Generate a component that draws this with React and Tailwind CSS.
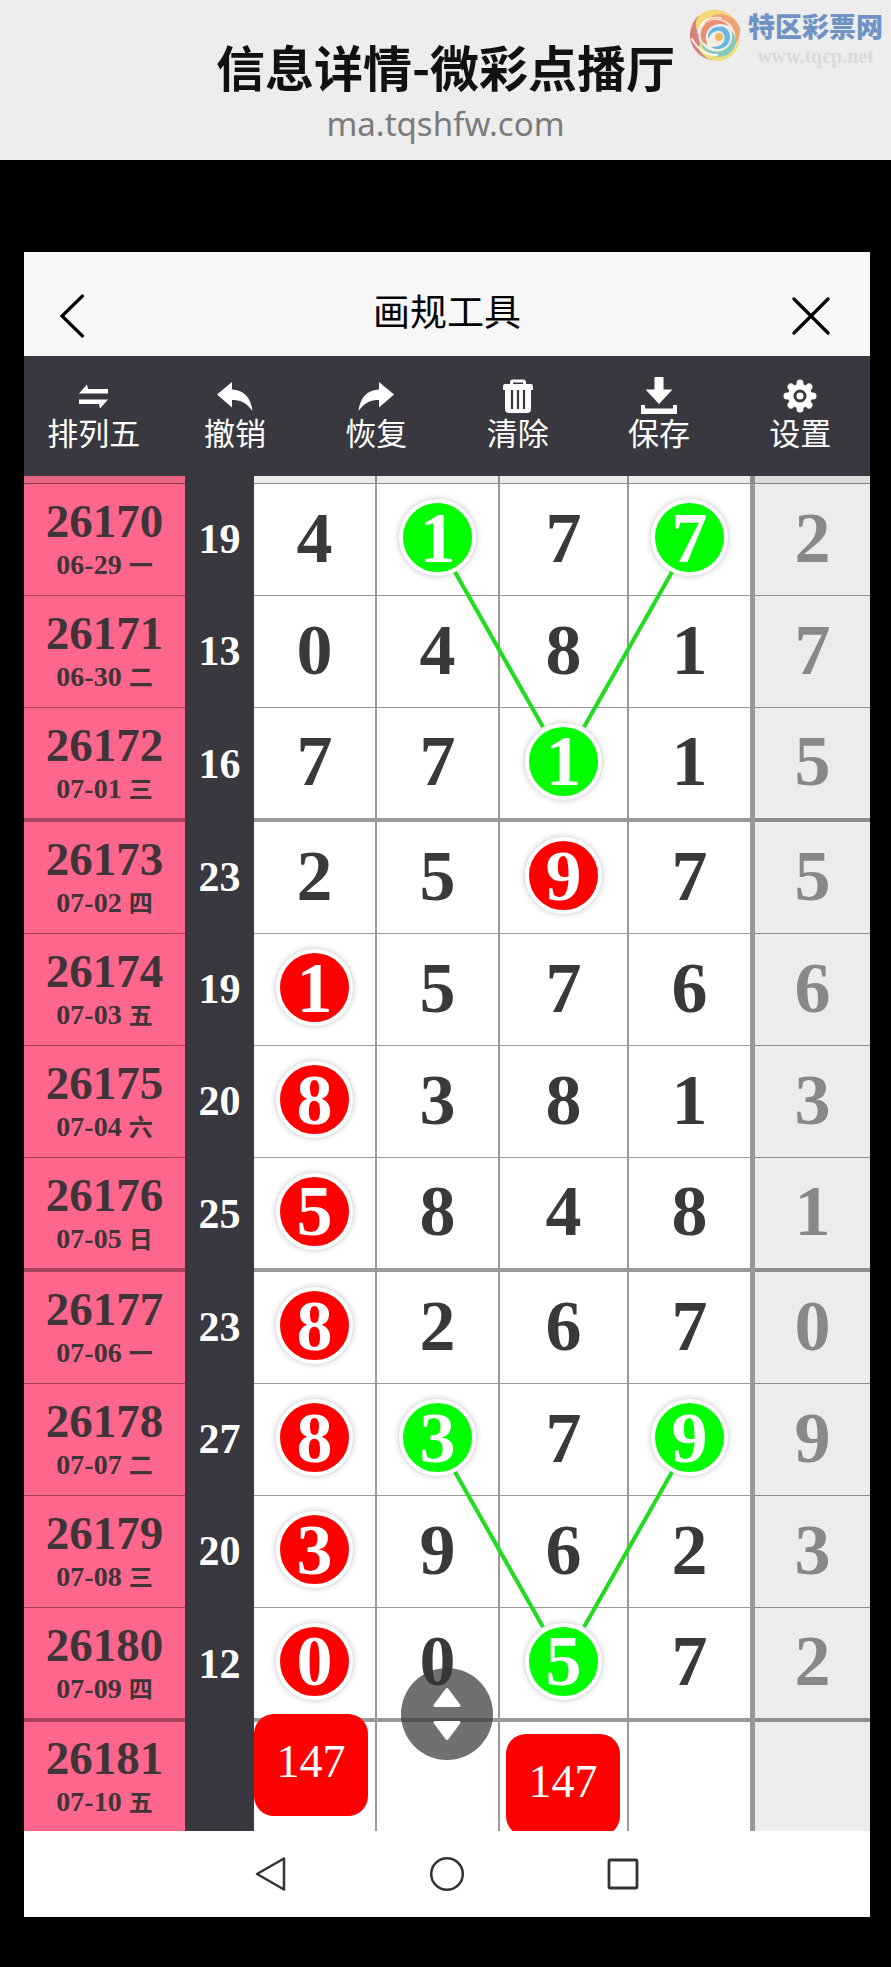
import React from "react";

const rows = [
  { issue: "26170", date: "06-29", day: "一", sum: 19, nums: [4, 1, 7, 7], last: 2, marks: { 1: "green", 3: "green" } },
  { issue: "26171", date: "06-30", day: "二", sum: 13, nums: [0, 4, 8, 1], last: 7 },
  { issue: "26172", date: "07-01", day: "三", sum: 16, nums: [7, 7, 1, 1], last: 5, marks: { 2: "green" }, thick: true },
  { issue: "26173", date: "07-02", day: "四", sum: 23, nums: [2, 5, 9, 7], last: 5, marks: { 2: "red" } },
  { issue: "26174", date: "07-03", day: "五", sum: 19, nums: [1, 5, 7, 6], last: 6, marks: { 0: "red" } },
  { issue: "26175", date: "07-04", day: "六", sum: 20, nums: [8, 3, 8, 1], last: 3, marks: { 0: "red" } },
  { issue: "26176", date: "07-05", day: "日", sum: 25, nums: [5, 8, 4, 8], last: 1, marks: { 0: "red" }, thick: true },
  { issue: "26177", date: "07-06", day: "一", sum: 23, nums: [8, 2, 6, 7], last: 0, marks: { 0: "red" } },
  { issue: "26178", date: "07-07", day: "二", sum: 27, nums: [8, 3, 7, 9], last: 9, marks: { 0: "red", 1: "green", 3: "green" } },
  { issue: "26179", date: "07-08", day: "三", sum: 20, nums: [3, 9, 6, 2], last: 3, marks: { 0: "red" } },
  { issue: "26180", date: "07-09", day: "四", sum: 12, nums: [0, 0, 5, 7], last: 2, marks: { 0: "red", 2: "green" }, thick: true },
];

const markColorMap = {
  green: "bg-[#00ff00]",
  red: "bg-[#ff0000]",
};

const tools = [
  { label: "排列五", icon: <SwapIcon /> },
  { label: "撤销", icon: <UndoIcon /> },
  { label: "恢复", icon: <RedoIcon /> },
  { label: "清除", icon: <TrashIcon /> },
  { label: "保存", icon: <SaveIcon /> },
  { label: "设置", icon: <GearIcon /> },
];

function SwapIcon() {
  return (
    <svg viewBox="0 0 36 36" className="size-9" fill="currentColor">
      <path d="M3 15.500 L11 6.500 L12 11 H32 V15.500 Z" />
      <path d="M3 21.500 H32 L24 30.500 L23 26 H3 Z" />
    </svg>
  );
}

function UndoIcon() {
  return (
    <svg viewBox="0 0 36 36" className="size-9" fill="currentColor">
      <path d="M0 16.500 L15 4 V11.500 C27 12 34 20 35.500 33 C29 24 23 22 15 22 V29.500 Z" />
    </svg>
  );
}

function RedoIcon() {
  return (
    <svg viewBox="0 0 36 36" className="size-9" fill="currentColor">
      <path d="M36 16.500 L21 4 V11.500 C9 12 2 20 0.500 33 C7 24 13 22 21 22 V29.500 Z" />
    </svg>
  );
}

function TrashIcon() {
  return (
    <svg viewBox="0 0 36 36" className="size-9" fill="currentColor">
      <path d="M11.500 7 V4.500 Q11.500 3 13 3 H23 Q24.500 3 24.500 4.500 V7" fill="none" stroke="currentColor" strokeWidth="3" />
      <path d="M5 6 H31 Q33 6 33 9 V12 H3 V9 Q3 6 5 6 Z" />
      <path d="M5 11 H31 V31 Q31 35 27 35 H9 Q5 35 5 31 Z" />
      <path d="M12 12 V31 M18 12 V31 M24 12 V31" stroke="#393840" strokeWidth="2.200" />
    </svg>
  );
}

function SaveIcon() {
  return (
    <svg viewBox="0 0 36 38" className="h-[38px] w-9" fill="currentColor">
      <path d="M13.500 0 H22.500 V12.500 H31.500 L18 27 L4.500 12.500 H13.500 Z" />
      <path d="M0 28 H4 V31.500 H32 V28 H36 V37 H0 Z" />
    </svg>
  );
}

function GearIcon() {
  return (
    <svg viewBox="0 0 36 36" className="size-9" fill="none" stroke="currentColor">
      <path
        d="M18 5 V31 M5 18 H31 M9 9 L27 27 M27 9 L9 27"
        strokeWidth="7"
        strokeLinecap="round"
      />
      <circle cx="18" cy="18" r="9.500" fill="currentColor" strokeWidth="5" />
      <circle cx="18" cy="18" r="5" fill="#fff" stroke="#393840" strokeWidth="3" />
    </svg>
  );
}

function SiteLogo() {
  return (
    <svg viewBox="0 0 54 54" className="size-[54px]" fill="none" strokeLinecap="round">
      <circle cx="27" cy="27" r="25.500" fill="#f4ece4" />
      <path d="M9 9 C2 17 0 28 4 37 C9 47 17 52 27 52 C33 52 37 51 40 49 C25 50 14 43 11 32 C9 23 12 14 20 8 C16 7 12 7 9 9 Z" fill="#d4837e" />
      <path d="M10 9 C16 2 26 0 35 3 C43 6 49 12 51 20 C46 12 38 8 30 8 C19 8 12 15 10 25 C7 19 7 14 10 9 Z" fill="#f4d878" />
      <path d="M16 17 C22 9 36 9 43 17 C48 23 49 32 45 39 C50 34 53 27 52 20 C48 10 40 6 31 6 C24 7 19 11 16 17 Z" fill="#eda472" />
      <path d="M12 33 C15 43 25 48 35 46 C44 43 49 38 52 29 C52 41 43 52 30 53 C22 53 14 48 11 41 Z" fill="#ecdf7c" />
      <path d="M12 32 C16 42 27 46 36 42 C43 38 46 30 43 22 C51 31 48 42 39 47 C29 52 15 46 12 32 Z" fill="#86cbbd" />
      <path d="M20 31 C18 22 25 16 33 18 C41 20 44 28 41 34 C38 41 29 43 23 39 C28 39 34 38 36 33 C38 27 34 22 29 23 C24 24 22 27 20 31 Z" fill="#67b8e0" />
      <path d="M13 31 C11 20 18 12 28 12 C33 12 38 14 41 18 C33 14 24 16 20 22 C17 27 18 33 21 37 C17 36 14 34 13 31 Z" fill="#e99070" />
      <path d="M4 31 C10 42 19 47 29 47" stroke="#fff" strokeWidth="1.800" opacity="0.9" />
      <path d="M10 25 C12 13 22 8 33 10" stroke="#fff" strokeWidth="1.500" opacity="0.8" />
      <path d="M21 37 C15 27 22 17 33 18" stroke="#fff" strokeWidth="1.500" opacity="0.8" />
      <circle cx="31" cy="29" r="4" fill="#f0b65e" />
    </svg>
  );
}

function PageHeader() {
  return (
    <header className="relative flex h-40 flex-col items-center bg-[#ededed] pt-8">
      <h1 className="text-[49px] leading-[68px] font-bold text-[#111]">
        信息详情-微彩点播厅
      </h1>
      <p className="font-['Noto_Sans'] text-[33px] leading-[48px] text-[#7b7b7b]">
        ma.tqshfw.com
      </p>
      <div className="absolute top-2 right-2 flex items-start gap-1.5">
        <SiteLogo />
        <div className="flex flex-col items-center gap-1">
          <span className="text-[27px] leading-9 font-black text-[#6f94c4]">特区彩票网</span>
          <span className="font-['Liberation_Serif'] text-[20px] leading-4 font-bold text-[#dadada]">
            www.tqcp.net
          </span>
        </div>
      </div>
    </header>
  );
}

function TitleBar() {
  return (
    <div className="flex h-[104px] items-center justify-between bg-[#f7f7f7] px-8 pt-3">
      <button type="button" aria-label="返回" className="w-[46px] pt-3">
        <svg viewBox="0 0 36 44" className="h-11 w-9" fill="none" stroke="#000" strokeWidth="3.200" strokeLinecap="round">
          <path d="M26.500 2 L6 22 L26.500 42" />
        </svg>
      </button>
      <h2 className="text-[37px] leading-[48px] text-black">画规工具</h2>
      <button type="button" aria-label="关闭" className="w-[46px] pt-3">
        <svg viewBox="0 0 38 38" className="size-[38px]" fill="none" stroke="#000" strokeWidth="3.200" strokeLinecap="round">
          <path d="M2 2 L36 36 M36 2 L2 36" />
        </svg>
      </button>
    </div>
  );
}

function Toolbar() {
  return (
    <div className="grid h-[120px] grid-cols-6 gap-0.5 bg-[#393840] pt-5 text-white">
      {tools.map((tool) => (
        <button key={tool.label} type="button" className="flex flex-col items-center">
          <span className="flex h-10 items-center">{tool.icon}</span>
          <span className="text-[31px] leading-8">{tool.label}</span>
        </button>
      ))}
    </div>
  );
}

function IssueCell({ issue, date, day, line }) {
  return (
    <th scope="row" className={`border-black/35 bg-[#ff668c] pt-1 text-[#3f3437] ${line}`}>
      <div className="text-[47px] leading-[48px]">{issue}</div>
      <div className="text-[28px] leading-10">
        {date} <span className="text-[24px]">{day}</span>
      </div>
    </th>
  );
}

function NumberCell({ value, mark, line, divider }) {
  return (
    <td className={`border-black/40 bg-white pb-1 text-[72px] leading-none text-[#393939] ${line} ${divider}`}>
      {mark ? (
        <span
          className={`mx-auto flex size-[77px] items-center justify-center rounded-full border-4 border-white text-white shadow-[0_0_6px_rgba(0,0,0,0.25)] ${markColorMap[mark]}`}
        >
          {value}
        </span>
      ) : (
        value
      )}
    </td>
  );
}

function Tag({ className }) {
  return (
    <div
      className={`absolute flex h-[102px] w-[114px] items-center justify-center rounded-[20px] bg-[#ff0000] pb-1.5 text-[46px] leading-none font-normal text-white ${className}`}
    >
      147
    </div>
  );
}

// column borders: thin between the first four, thick before the last one
const dividers = ["border-r-2", "border-r-2", "border-r-2", "border-r-[5px]"];

function TrendTable() {
  return (
    <div className="relative overflow-hidden">
      <table className="w-full table-fixed border-separate border-spacing-0 text-center font-['Liberation_Serif','Noto_Sans_CJK_SC',serif] font-bold">
        <colgroup>
          <col className="w-[161px]" />
          <col className="w-[69px]" />
          <col className="w-[123px]" />
          <col className="w-[123px]" />
          <col className="w-[129px]" />
          <col className="w-[126px]" />
          <col className="w-[115px]" />
        </colgroup>
        <tbody>
          <tr className="h-2" aria-hidden="true">
            <td className="border-b border-black/40 bg-[#e8637f]" />
            <td className="bg-[#393840]" />
            {dividers.map((divider, i) => (
              <td key={i} className={`border-b border-black/40 bg-[#ececec] ${divider}`} />
            ))}
            <td className="border-b border-black/40 bg-[#dcdcdc]" />
          </tr>
          {rows.map((row) => {
            const line = row.thick ? "border-b-4" : "border-b";
            return (
              <tr key={row.issue} className={row.thick ? "h-[114px]" : "h-28"}>
                <IssueCell issue={row.issue} date={row.date} day={row.day} line={line} />
                <td className="bg-[#393840] pb-0.5 text-[42px] leading-none text-white">{row.sum}</td>
                {row.nums.map((value, i) => (
                  <NumberCell
                    key={i}
                    value={value}
                    mark={row.marks?.[i]}
                    line={line}
                    divider={dividers[i]}
                  />
                ))}
                <td className={`border-black/40 bg-[#ececec] pb-1 text-[72px] leading-none text-[#888] ${line}`}>
                  {row.last}
                </td>
              </tr>
            );
          })}
          <tr className="h-[109px]">
            <IssueCell issue="26181" date="07-10" day="五" line="" />
            <td className="bg-[#393840]" />
            <td className="relative border-r-2 border-black/40 bg-white">
              <Tag className="-top-2 left-0" />
            </td>
            <td className="border-r-2 border-black/40 bg-white" />
            <td className="relative border-r-2 border-black/40 bg-white">
              <Tag className="top-3 left-1.5" />
            </td>
            <td className="border-r-[5px] border-black/40 bg-white" />
            <td className="bg-[#ececec]" />
          </tr>
        </tbody>
      </table>

      <svg
        viewBox="0 0 846 1355"
        preserveAspectRatio="none"
        className="pointer-events-none absolute inset-0 size-full"
        stroke="#1fdc1f"
        strokeWidth="4"
      >
        <path d="M431 96 L519 251 M648 96 L560 251" />
        <path d="M431 996 L519 1151 M648 996 L560 1151" />
      </svg>

      <button
        type="button"
        aria-label="上下移动"
        className="absolute bottom-[71px] left-1/2 flex size-[92px] -translate-x-1/2 items-center justify-center rounded-full bg-[#333]/70"
      >
        <svg viewBox="0 0 32 54" className="h-[54px] w-8" fill="#fff">
          <path d="M14.500 2 Q16 0 17.500 2 L29.500 18 Q30 20 28 20 H4 Q2 20 2.500 18 Z" />
          <path d="M14.500 52 Q16 54 17.500 52 L29.500 36 Q30 34 28 34 H4 Q2 34 2.500 36 Z" />
        </svg>
      </button>
    </div>
  );
}

function SystemNav() {
  return (
    <nav className="flex h-[86px] items-center justify-center bg-white">
      <button type="button" aria-label="后退" className="flex w-44 justify-center">
        <svg viewBox="0 0 36 36" className="size-9" fill="none" stroke="#333" strokeWidth="2.500" strokeLinejoin="round">
          <path d="M4 18 L31 2.500 V33.500 Z" />
        </svg>
      </button>
      <button type="button" aria-label="主页" className="flex w-44 justify-center">
        <svg viewBox="0 0 36 36" className="size-9" fill="none" stroke="#333" strokeWidth="2.500">
          <circle cx="18" cy="18" r="15.800" />
        </svg>
      </button>
      <button type="button" aria-label="最近任务" className="flex w-44 justify-center">
        <svg viewBox="0 0 36 36" className="size-9" fill="none" stroke="#333" strokeWidth="2.800">
          <rect x="4" y="4" width="28" height="28" rx="1" />
        </svg>
      </button>
    </nav>
  );
}

export default function App() {
  return (
    <div className="min-h-screen bg-black font-['Noto_Sans_CJK_SC',sans-serif]">
      <PageHeader />
      <main className="pt-[92px] pr-[21px] pb-[50px] pl-6">
        <TitleBar />
        <Toolbar />
        <TrendTable />
        <SystemNav />
      </main>
    </div>
  );
}
